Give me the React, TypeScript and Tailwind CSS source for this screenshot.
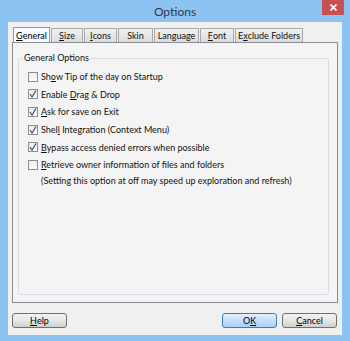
import React from 'react';

const font = { fontFamily: 'Lato, "Open Sans", sans-serif' };

function U({ children }: { children: React.ReactNode }) {
  return <span className="underline underline-offset-[1px]">{children}</span>;
}

function Tab({ children, active = false, w }: { children: React.ReactNode; active?: boolean; w: string }) {
  return (
    <div
      className={`${w} flex items-center justify-center border border-b-0 text-[9px] leading-none ${
        active
          ? 'h-[15px] -mt-[1px] border-[#7f9db9] bg-[#f7fbff] text-black z-10'
          : 'h-[14px] border-[#a9a9a9] bg-gradient-to-b from-[#f2f2f2] to-[#dcdcdc] text-[#111]'
      }`}
    >
      {children}
    </div>
  );
}

function Check({ checked, children }: { checked?: boolean; children: React.ReactNode }) {
  return (
    <div className="flex h-[17.6px] items-center gap-[3px]">
      <div className="flex h-[10px] w-[10px] items-center justify-center border border-[#8f8f8f] bg-gradient-to-b from-[#ececec] to-[#fcfcfc]">
        {checked && (
          <svg width="8" height="8" viewBox="0 0 8 8">
            <path d="M1 4 L3 7 L7 0.5" fill="none" stroke="#44587a" strokeWidth="1.3" />
          </svg>
        )}
      </div>
      <span className="text-[9px] leading-none text-[#111]">{children}</span>
    </div>
  );
}

function Btn({ children, primary = false }: { children: React.ReactNode; primary?: boolean }) {
  return (
    <div
      className={`flex h-[15px] w-[55px] items-center justify-center rounded-[3px] border text-[9px] leading-none text-black ${
        primary
          ? 'border-[#3c7fb1] bg-gradient-to-b from-[#e5f1fb] via-[#c4e0f8] to-[#a7d0f3]'
          : 'border-[#707070] bg-gradient-to-b from-[#f2f2f2] via-[#e6e6e6] to-[#cfcfcf]'
      }`}
    >
      {children}
    </div>
  );
}

export default function App() {
  return (
    <div className="flex h-[341px] w-[350px] flex-col bg-[#8cc3f0]" style={font}>
      <div className="relative flex h-[22px] items-center justify-center">
        <span className="mt-[2px] text-[12px] text-[#2a3b4f]">Options</span>
        <div className="absolute right-[6px] top-0 flex h-[15px] w-[22px] items-center justify-center bg-[#c75050]">
          <svg width="7" height="7" viewBox="0 0 7 7">
            <path d="M0.5 0.5 L6.5 6.5 M6.5 0.5 L0.5 6.5" stroke="white" strokeWidth="1.6" />
          </svg>
        </div>
      </div>
      <div className="mx-[8px] mb-[6px] flex flex-1 flex-col bg-[#f0f0f0] px-[4px] pt-[6px]">
        <div className="ml-[1px] flex h-[14px] items-end gap-[1px]">
          <Tab active w="w-[37px]"><U>G</U>eneral</Tab>
          <Tab w="w-[32px]"><U>S</U>ize</Tab>
          <Tab w="w-[33px]"><U>I</U>cons</Tab>
          <Tab w="w-[35px]">Skin</Tab>
          <Tab w="w-[45px]">Language</Tab>
          <Tab w="w-[34px]"><U>F</U>ont</Tab>
          <Tab w="w-[68px]">E<U>x</U>clude Folders</Tab>
        </div>
        <div className="flex h-[261px] w-[326px] flex-col border border-[#898c95] bg-[#f4f4f4] pb-[7px] pl-[5px] pr-[8px] pt-[15px]">
          <div className="relative flex-1 rounded-[2px] border border-[#d5dfe5] pl-[9px] pt-[9px]">
            <span className="absolute -top-[6px] left-[4px] bg-[#f4f4f4] px-[1px] text-[9px] leading-none text-[#111]">
              General Options
            </span>
            <Check>Sh<U>o</U>w Tip of the day on Startup</Check>
            <Check checked>Enable <U>D</U>rag &amp; Drop</Check>
            <Check checked><U>A</U>sk for save on Exit</Check>
            <Check checked>Shel<U>l</U> Integration (Context Menu)</Check>
            <Check checked><U>B</U>ypass access denied errors when possible</Check>
            <Check><U>R</U>etrieve owner information of files and folders</Check>
            <div className="mt-[2px] pl-[13px] text-[9px] leading-none text-[#111]">
              (Setting this option at off may speed up exploration and refresh)
            </div>
          </div>
        </div>
        <div className="mt-[10px] flex items-center">
          <Btn><U>H</U>elp</Btn>
          <div className="flex-1" />
          <Btn primary>O<U>K</U></Btn>
          <div className="w-[5px]" />
          <Btn><U>C</U>ancel</Btn>
          <div className="w-[1px]" />
        </div>
      </div>
    </div>
  );
}
